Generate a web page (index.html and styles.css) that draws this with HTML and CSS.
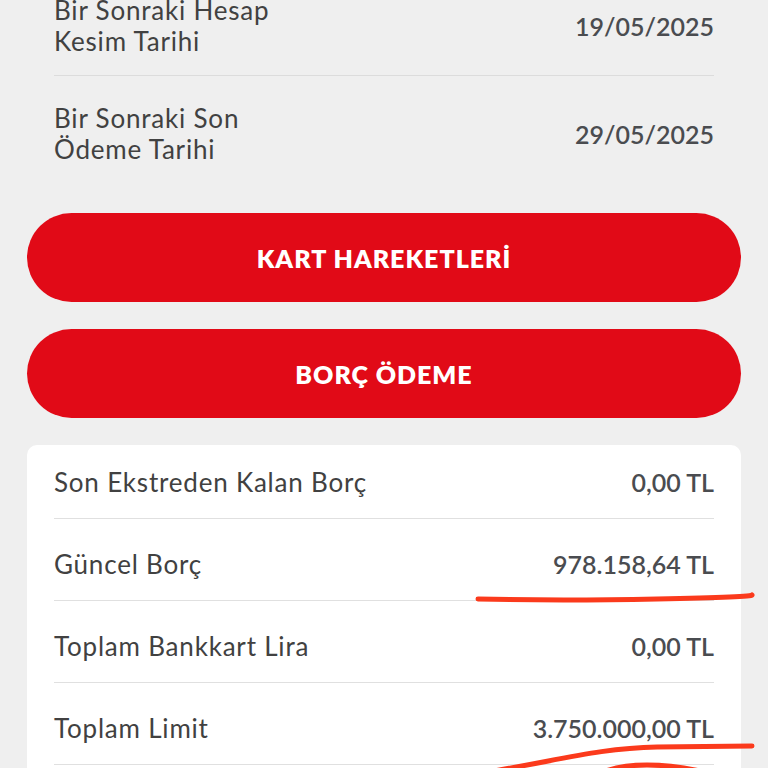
FILE: index.html
```html
<!DOCTYPE html>
<html lang="tr">
<head>
<meta charset="utf-8">
<title>Kart Detay</title>
<link rel="stylesheet" href="styles.css">
</head>
<body>
<div class="page">
  <section class="dates">
    <div class="date-row first">
      <div class="label">Bir Sonraki Hesap<br>Kesim Tarihi</div>
      <div class="date">19/05/2025</div>
    </div>
    <div class="date-row">
      <div class="label">Bir Sonraki Son<br>Ödeme Tarihi</div>
      <div class="date">29/05/2025</div>
    </div>
  </section>
  <section class="actions">
    <button class="btn">KART HAREKETLERİ</button>
    <button class="btn">BORÇ ÖDEME</button>
  </section>
  <section class="card">
    <div class="card-row"><span class="label">Son Ekstreden Kalan Borç</span><span class="amount">0,00 TL</span></div>
    <div class="card-row"><span class="label">Güncel Borç</span><span class="amount">978.158,64 TL</span></div>
    <div class="card-row"><span class="label">Toplam Bankkart Lira</span><span class="amount">0,00 TL</span></div>
    <div class="card-row"><span class="label">Toplam Limit</span><span class="amount">3.750.000,00 TL</span></div>
  </section>
  <svg class="marks" width="768" height="768" viewBox="0 0 768 768">
    <path d="M478 599 Q 560 601 657 599 T 752 595" />
    <path d="M488 772 C 560 760 600 748 657 747 L 752 746" />
    <path d="M603 772 Q 640 758 705 772" />
  </svg>
</div>
</body>
</html>
```
FILE: styles.css
```css
html, body {
  margin: 0;
  padding: 0;
  background: #efefef;
}
body {
  font-family: "Lato", "Open Sans", sans-serif;
  color: #414141;
  overflow: hidden;
  height: 768px;
}
.page {
  position: relative;
  height: 768px;
  overflow: hidden;
}
.dates {
  padding: 0 54px;
  margin-top: -5px;
}
.label {
  letter-spacing: 0.8px;
}
.date-row {
  display: flex;
  justify-content: space-between;
  align-items: center;
  font-size: 26px;
  line-height: 31px;
  padding: 27px 0 0;
}
.date-row.first {
  padding: 0 0 18px;
  border-bottom: 1px solid #dcdcdc;
}
.date {
  font-weight: 600;
  color: #4a4c50;
  font-size: 25px;
}
.actions {
  display: flex;
  flex-direction: column;
  gap: 27px;
  padding: 48px 27px 27px;
}
.btn {
  display: block;
  width: 100%;
  height: 89px;
  border: none;
  border-radius: 45px;
  background: #e10a17;
  color: #ffffff;
  font-family: "Lato", sans-serif;
  font-weight: 800;
  font-size: 25px;
  letter-spacing: 1px;
  padding: 0;
}
.card {
  margin: 0 27px;
  background: #ffffff;
  border-radius: 10px;
  padding: 0 27px 40px;
}
.card-row {
  display: flex;
  justify-content: space-between;
  align-items: center;
  font-size: 26px;
  line-height: 31px;
  padding: 30px 0 20px;
  border-bottom: 1px solid #e0e0e0;
}
.card-row:first-child {
  padding-top: 22px;
}
.amount {
  font-weight: 600;
  font-size: 25px;
  color: #4a4c50;
}
.marks {
  position: absolute;
  top: 0;
  left: 0;
  pointer-events: none;
}
.marks path {
  fill: none;
  stroke: #fb3a1c;
  stroke-width: 5;
  stroke-linecap: round;
}
```
